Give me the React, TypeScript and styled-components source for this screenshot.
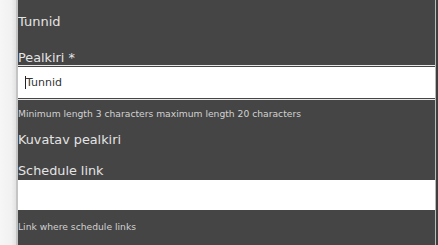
import React from 'react';
import { createGlobalStyle, styled } from 'styled-components';

const GlobalStyle = createGlobalStyle`
  html, body {
    margin: 0;
    padding: 0;
    background: #3f3f3f;
    overflow: hidden;
  }
  body {
    font-family: 'DejaVu Sans', 'Liberation Sans', sans-serif;
  }
`;

const Page = styled.div`
  display: flex;
  height: 245px;
  margin-right: 2px;
`;

const Gutter = styled.div`
  width: 16px;
  flex-shrink: 0;
  background: linear-gradient(to right, #f6f6f6 0%, #f1f1f1 70%, #e2e2e2 100%);
  border-right: 2px solid #c4c4c4;
`;

const Panel = styled.div`
  flex: 1;
  background: #454545;
  border-right: 1px solid #b9b9b9;
  padding-top: 14px;
  overflow: hidden;
  color: #e4e4e4;
`;

const SectionTitle = styled.div`
  font-size: 13px;
  line-height: 16px;
  margin-bottom: 21px;
`;

const Label = styled.div<{ $gap?: number; $lh?: number }>`
  font-size: 12.8px;
  line-height: ${(p) => p.$lh ?? 16}px;
  margin-top: ${(p) => p.$gap ?? 0}px;
`;

const TextBox = styled.div<{ $focused?: boolean; $gap?: number; $h?: number }>`
  margin-top: ${(p) => p.$gap ?? 0}px;
  height: ${(p) => p.$h ?? 30}px;
  background: #ffffff;
  display: flex;
  align-items: center;
  padding-left: 7px;
  font-size: 11px;
  color: #333;
  box-shadow: ${(p) => (p.$focused ? '0 0 0 1px #454545, 0 0 0 2px #e8e8e8' : 'none')};
`;

const Caret = styled.span`
  display: inline-block;
  width: 1px;
  height: 13px;
  background: #222;
`;

const Hint = styled.div<{ $gap?: number }>`
  font-size: 9.2px;
  line-height: 12px;
  color: #d2d2d2;
  margin-top: ${(p) => p.$gap ?? 0}px;
`;

const App: React.FC = () => {
  return (
    <>
      <GlobalStyle />
      <Page>
        <Gutter />
        <Panel>
          <SectionTitle>Tunnid</SectionTitle>
          <Label $lh={14}>Pealkiri *</Label>
          <TextBox $focused $gap={2} $h={31}>
            <Caret />
            Tunnid
          </TextBox>
          <Hint $gap={10}>Minimum length 3 characters maximum length 20 characters</Hint>
          <Label $gap={12}>Kuvatav pealkiri</Label>
          <Label $gap={15}>Schedule link</Label>
          <TextBox $gap={1} />
          <Hint $gap={11}>Link where schedule links</Hint>
        </Panel>
      </Page>
    </>
  );
};

export default App;
